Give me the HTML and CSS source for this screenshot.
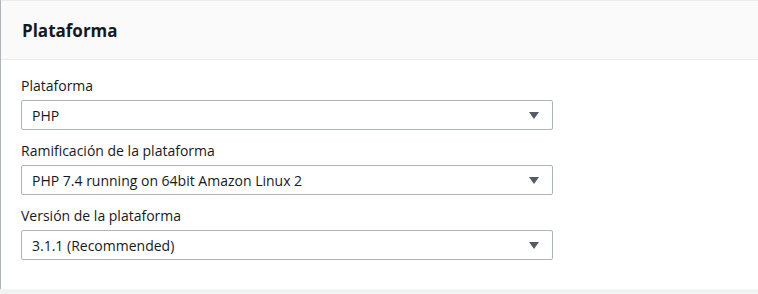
FILE: index.html
```html
<!DOCTYPE html>
<html lang="es">
  <head>
    <meta charset="UTF-8" />
    <meta name="viewport" content="width=device-width, initial-scale=1.0" />
    <title>Plataforma</title>
    <link rel="stylesheet" href="styles.css">
  </head>
  <body>
    <div class="card">
      <div class="card-header">
        <h2>Plataforma</h2>
      </div>
      <div class="card-body">
        <div class="field">
          <label>Plataforma</label>
          <div class="select">
            <span>PHP</span>
            <svg class="caret" width="10" height="7" viewBox="0 0 10 7"><path d="M0 0h10L5 7z" fill="#545b64"/></svg>
          </div>
        </div>
        <div class="field">
          <label>Ramificación de la plataforma</label>
          <div class="select">
            <span>PHP 7.4 running on 64bit Amazon Linux 2</span>
            <svg class="caret" width="10" height="7" viewBox="0 0 10 7"><path d="M0 0h10L5 7z" fill="#545b64"/></svg>
          </div>
        </div>
        <div class="field">
          <label>Versión de la plataforma</label>
          <div class="select">
            <span>3.1.1 (Recommended)</span>
            <svg class="caret" width="10" height="7" viewBox="0 0 10 7"><path d="M0 0h10L5 7z" fill="#545b64"/></svg>
          </div>
        </div>
      </div>
    </div>
  </body>
</html>
```

FILE: styles.css
```css
body {
  font-family: "Open Sans", "Noto Sans", Arial, sans-serif;
  margin: 0;
  background-color: #f2f3f3;
  color: #16191f;
}
.card {
  background-color: #fff;
  border-top: 1px solid #eaeded;
  box-shadow: 0 1px 1px 0 rgba(0, 28, 36, 0.3), -1px 0 1px 0 rgba(0, 28, 36, 0.25);
  margin-left: 1px;
}
.card-header {
  background-color: #fafafa;
  border-bottom: 1px solid #eaeded;
  height: 58px;
  padding: 0 21px;
  display: flex;
  align-items: center;
}
.card-header h2 {
  margin: 0;
  font-size: 17px;
  font-weight: 700;
}
.card-body {
  padding: 15px 20px 29px;
}
.field {
  margin-bottom: 10px;
}
.field:last-child {
  margin-bottom: 0;
}
label {
  display: block;
  font-size: 14px;
  line-height: 22px;
  margin-bottom: 3px;
}
.select {
  width: 532px;
  height: 30px;
  box-sizing: border-box;
  border: 1px solid #aab7b8;
  border-radius: 2px;
  padding: 0 13px 0 10px;
  display: flex;
  align-items: center;
  justify-content: space-between;
  font-size: 14px;
}
```
